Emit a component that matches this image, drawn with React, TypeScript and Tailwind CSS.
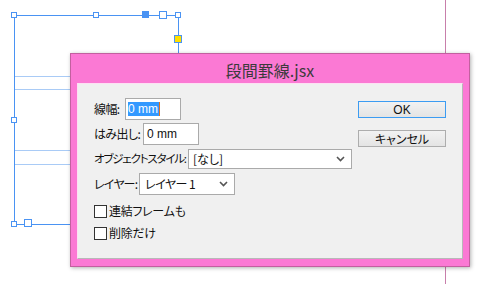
import React from 'react';

const jp = "font-['Meiryo_UI','Noto_Sans_CJK_JP',sans-serif] [font-feature-settings:'palt']";

function Chevron() {
  return (
    <svg width="9" height="6" viewBox="0 0 9 6" className="shrink-0">
      <path d="M1 1 L4.5 4.5 L8 1" fill="none" stroke="#555" strokeWidth="1.6" />
    </svg>
  );
}

function Check({ label }: { label: string }) {
  return (
    <div className="flex items-center h-[12px]">
      <div className="w-[13px] h-[13px] border border-[#333] bg-white" />
      <span className="ml-[2px] text-[12px] text-[#111] leading-none tracking-[-0.3px]">{label}</span>
    </div>
  );
}

function Label({ w, children }: { w: string; children: React.ReactNode }) {
  return <span className={`whitespace-nowrap shrink-0 ${w}`}>{children}</span>;
}

function Canvas() {
  const blue = '#4a93f3';
  const small = [[14, 15], [96, 15], [178, 15], [14, 120], [14, 224]];
  return (
    <svg width="482" height="284" className="absolute inset-0">
      <line x1="445.5" y1="0" x2="445.5" y2="284" stroke="#c87fab" />
      {[76.5, 89.5, 150.5, 164.5].map(y => (
        <line key={y} x1="15" y1={y} x2="72" y2={y} stroke="#a9cbf6" />
      ))}
      <path d="M14.5 224.5 V15.5 H178.5 V60" fill="none" stroke={blue} />
      <line x1="14" y1="224.5" x2="72" y2="224.5" stroke={blue} />
      {small.map(([x, y]) => (
        <rect key={`${x}-${y}`} x={x - 2.5} y={y - 2.5} width="5" height="5" fill="white" stroke={blue} />
      ))}
      <rect x="142" y="11" width="7" height="7" fill={blue} />
      <rect x="159.5" y="11.5" width="7" height="7" fill="white" stroke={blue} />
      <rect x="24.5" y="219.5" width="7" height="7" fill="white" stroke={blue} />
      <rect x="174.5" y="35.5" width="7" height="7" fill="#ffe000" stroke={blue} />
    </svg>
  );
}

export default function App() {
  return (
    <div className={`relative w-[482px] h-[284px] bg-white overflow-hidden ${jp}`}>
      <Canvas />
      <div className="absolute left-[70px] top-[53px] w-[400px] h-[214px] bg-[#fb79d4] border border-[#c2609f] shadow-[1px_1px_4px_rgba(0,0,0,0.3)] flex flex-col px-[6px] pb-[7px]">
        <div className="h-[29px] flex items-center justify-center text-[16px] text-[#3b3b3b] pt-[3px]">段間罫線.jsx</div>
        <div className="flex-1 bg-[#f0f0f0] border-l border-t border-l-[#fde0f3] border-t-[#fde0f3] border-r border-b border-r-[#b8b8b8] border-b-[#b8b8b8] flex text-[12px] text-[#111]">
          <div className="w-[280px] pl-[16px] pt-[14px] flex flex-col">
            <div className="flex items-center h-[22px]">
              <Label w="w-[31px] tracking-[-0.6px]">線幅:</Label>
              <div className="w-[56px] h-[22px] border border-[#aaa] bg-white flex items-center pl-[2px] font-['Liberation_Sans',sans-serif]">
                <span className="bg-[#3399ff] text-white leading-[14px] pr-[1px]">0 mm</span>
                <span className="w-[1px] h-[14px] bg-[#e07020]" />
              </div>
            </div>
            <div className="flex items-center h-[22px] mt-[3px]">
              <Label w="w-[49px] tracking-[-0.6px]">はみ出し:</Label>
              <div className="w-[56px] h-[22px] border border-[#aaa] bg-white flex items-center pl-[3px] font-['Liberation_Sans',sans-serif]">0 mm</div>
            </div>
            <div className="flex items-center h-[20px] mt-[4px]">
              <Label w="w-[94px] text-[11.5px] tracking-[-1.2px]">オブジェクトスタイル:</Label>
              <div className="w-[164px] h-[20px] border border-[#aaa] bg-white flex items-center justify-between pl-[4px] pr-[6px]">
                <span>[なし]</span>
                <Chevron />
              </div>
            </div>
            <div className="flex items-center h-[22px] mt-[4px]">
              <Label w="w-[45px] tracking-[-0.8px]">レイヤー:</Label>
              <div className="w-[96px] h-[22px] border border-[#aaa] bg-white flex items-center justify-between pl-[5px] pr-[6px]">
                <span className="tracking-[-0.5px]">レイヤー 1</span>
                <Chevron />
              </div>
            </div>
            <div className="mt-[10px]"><Check label="連結フレームも" /></div>
            <div className="mt-[10px]"><Check label="削除だけ" /></div>
          </div>
          <div className="flex flex-col pt-[17px]">
            <button className="w-[88px] h-[17px] border border-[#3c9cf2] bg-gradient-to-b from-[#f2f2f2] to-[#e4e4e4] text-[12px] leading-none font-['Liberation_Sans',sans-serif]">OK</button>
            <button className="w-[88px] h-[17px] mt-[12px] border border-[#adadad] bg-gradient-to-b from-[#f2f2f2] to-[#e4e4e4] text-[12px] leading-none">キャンセル</button>
          </div>
        </div>
      </div>
    </div>
  );
}
